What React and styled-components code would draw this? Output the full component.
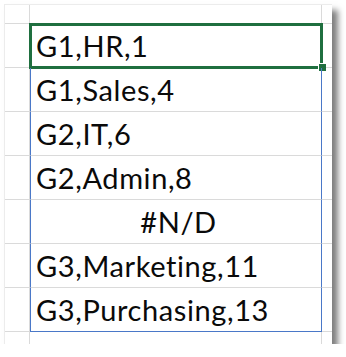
import React from "react";
import styled, { createGlobalStyle } from "styled-components";

const rows = [
  { text: "G1,HR,1", active: true },
  { text: "G1,Sales,4" },
  { text: "G2,IT,6" },
  { text: "G2,Admin,8" },
  { text: "#N/D", center: true },
  { text: "G3,Marketing,11" },
  { text: "G3,Purchasing,13" },
];

export default function App() {
  return (
    <>
      <Global />
      <Card>
        <Cell />
        <Cell />
        <Cell $last />
        {rows.map((r, i) => (
          <React.Fragment key={i}>
            <Cell />
            <DataCell
              $end={i === rows.length - 1}
              $center={r.center}
              $active={r.active}
            >
              {r.text}
              {r.active && <Handle />}
            </DataCell>
            <Cell $last />
          </React.Fragment>
        ))}
        <Cell $bottom />
        <Cell $bottom />
        <Cell $bottom $last />
      </Card>
    </>
  );
}

const Global = createGlobalStyle`
  body {
    margin: 0;
    background: #ffffff;
  }
`;

const Card = styled.div`
  margin: 4px 0 0 4px;
  width: 328px;
  height: 340px;
  background: #ffffff;
  border-top: 1px solid #ececec;
  border-left: 1px solid #ececec;
  box-sizing: border-box;
  box-shadow: 6px 6px 6px rgba(0, 0, 0, 0.5);
  display: grid;
  grid-template-columns: 25px 292px 1fr;
  grid-template-rows: 19px repeat(7, 44px) 1fr;
  font-family: Lato, "Liberation Sans", sans-serif;
`;

const Cell = styled.div`
  border-right: ${({ $last }) => ($last ? "none" : "1px solid #dadada")};
  border-bottom: ${({ $bottom }) => ($bottom ? "none" : "1px solid #dadada")};
  box-sizing: border-box;
`;

const DataCell = styled.div`
  position: relative;
  box-sizing: border-box;
  border-left: 1px solid #4a78c8;
  border-right: 1px solid #4a78c8;
  border-bottom: 1px solid ${({ $end }) => ($end ? "#4a78c8" : "#dadada")};
  display: flex;
  align-items: flex-end;
  justify-content: ${({ $center }) => ($center ? "center" : "flex-start")};
  padding: 0 0 4px 5px;
  font-size: 29px;
  letter-spacing: 0.6px;
  line-height: 34px;
  color: #0a0a0a;
  white-space: nowrap;
  outline: ${({ $active }) => ($active ? "3px solid #1f6f3f" : "none")};
  outline-offset: -2px;
`;

const Handle = styled.span`
  position: absolute;
  right: -5px;
  bottom: -5px;
  width: 7px;
  height: 7px;
  background: #1f6f3f;
  border: 1px solid #ffffff;
  border-right: none;
`;
